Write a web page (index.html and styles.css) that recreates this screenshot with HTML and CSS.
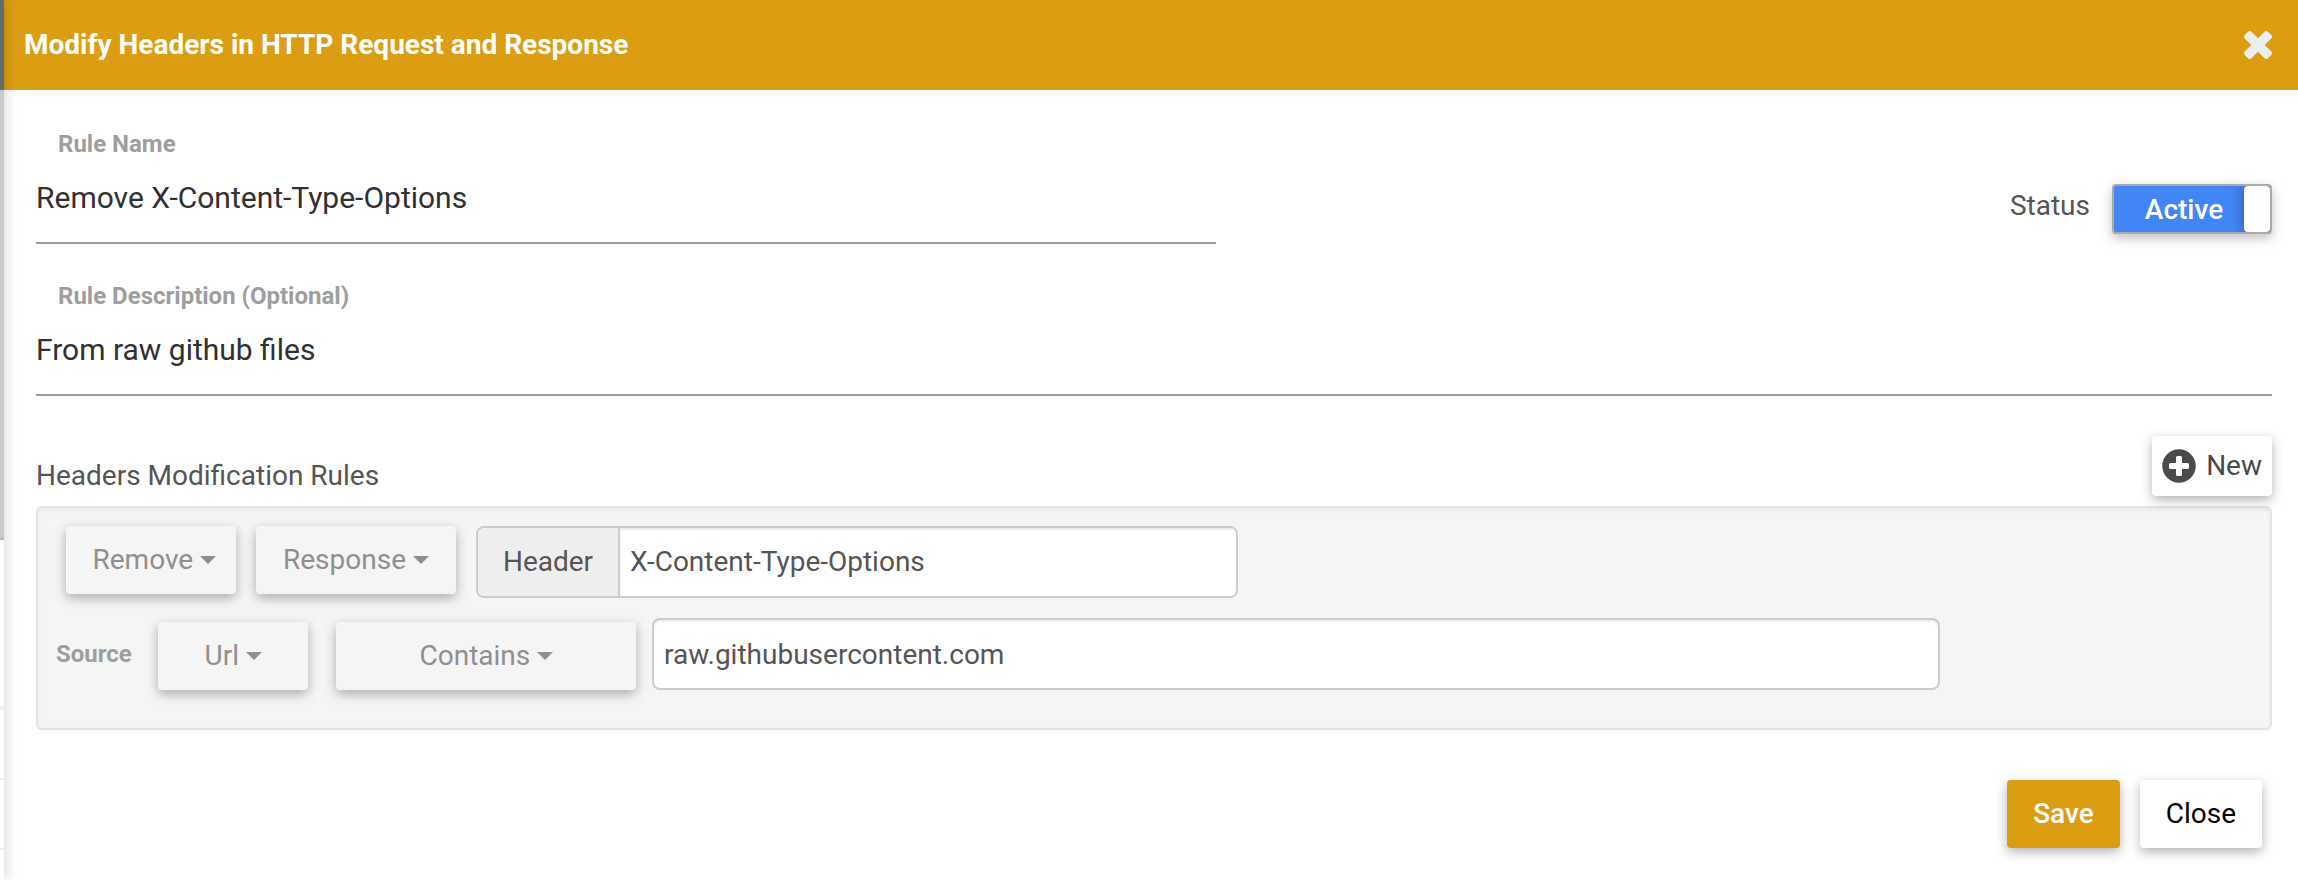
FILE: index.html
```html
<!DOCTYPE html>
<html lang="en">
<head>
<meta charset="utf-8">
<title>Modify Headers in HTTP Request and Response</title>
<link rel="stylesheet" href="styles.css">
</head>
<body>
<div class="page">
  <div class="backdrop" aria-hidden="true">
    <div class="backdrop-nav"></div>
    <div class="backdrop-panel"></div>
    <div class="backdrop-gap"></div>
    <div class="backdrop-row"></div>
    <div class="backdrop-row"></div>
  </div>
  <main class="editor">
    <header class="editor-header">
      <h1 class="editor-title">Modify Headers in HTTP Request and Response</h1>
      <button class="dismiss" type="button" aria-label="Close editor">
        <svg class="dismiss-icon" viewBox="0 0 26 26" fill="#eee" aria-hidden="true"><rect x="-2.200" y="8.600" width="30.400" height="8.800" rx="2.200" transform="rotate(45 13 13)"/><rect x="-2.200" y="8.600" width="30.400" height="8.800" rx="2.200" transform="rotate(-45 13 13)"/></svg>
      </button>
    </header>
    <form class="editor-body">
      <div class="name-row">
        <div class="field field-name">
          <label class="field-label" for="rule-name">Rule Name</label>
          <input class="field-input" id="rule-name" type="text" value="Remove X-Content-Type-Options">
        </div>
        <div class="status">
          <label class="status-label" for="status">Status</label>
          <label class="toggle">
            <input class="toggle-box" id="status" type="checkbox" checked>
            <span class="toggle-text">Active</span>
            <span class="toggle-handle"></span>
          </label>
        </div>
      </div>
      <div class="field">
        <label class="field-label" for="rule-description">Rule Description (Optional)</label>
        <input class="field-input" id="rule-description" type="text" value="From raw github files">
      </div>
      <div class="section-head">
        <h2 class="section-title">Headers Modification Rules</h2>
        <button class="button button-new" type="button">
          <svg class="plus-icon" viewBox="0 0 34 34" aria-hidden="true"><circle cx="17" cy="17" r="16.700" fill="#4a4a4a"/><path d="M14 8.500a1.500 1.500 0 0 1 1.500-1.500h3a1.500 1.500 0 0 1 1.500 1.500V14h5.500a1.500 1.500 0 0 1 1.500 1.500v3a1.500 1.500 0 0 1-1.500 1.500H20v5.500a1.500 1.500 0 0 1-1.500 1.500h-3a1.500 1.500 0 0 1-1.500-1.500V20H8.500A1.500 1.500 0 0 1 7 18.500v-3A1.500 1.500 0 0 1 8.500 14H14Z" fill="#fff"/></svg>
          New
        </button>
      </div>
      <section class="rules">
        <div class="rule-row">
          <div class="picker picker-action">
            <select class="picker-select" aria-label="Action"><option>Remove</option></select>
            <span class="caret"></span>
          </div>
          <div class="picker picker-target">
            <select class="picker-select" aria-label="Target"><option>Response</option></select>
            <span class="caret"></span>
          </div>
          <div class="input-group">
            <label class="addon" for="header-name">Header</label>
            <input class="group-input" id="header-name" type="text" value="X-Content-Type-Options">
          </div>
        </div>
        <div class="rule-row source-row">
          <label class="source-label" for="source-value">Source</label>
          <div class="picker picker-key">
            <select class="picker-select" aria-label="Source key"><option>Url</option></select>
            <span class="caret"></span>
          </div>
          <div class="picker picker-operator">
            <select class="picker-select" aria-label="Operator"><option>Contains</option></select>
            <span class="caret"></span>
          </div>
          <input class="source-input" id="source-value" type="text" value="raw.githubusercontent.com">
        </div>
      </section>
      <footer class="actions">
        <button class="button button-save" type="submit">Save</button>
        <button class="button button-close" type="button">Close</button>
      </footer>
    </form>
  </main>
</div>
</body>
</html>
```

FILE: styles.css
```css
*, *::before, *::after { box-sizing: border-box; }

body {
  margin: 0;
  background: #fff;
  color: #555;
  font-family: Roboto, "Liberation Sans", sans-serif;
  font-size: 28px;
  line-height: 40px;
}

button, input, select { font: inherit; color: inherit; }

.page {
  display: grid;
  grid-template-columns: 4px 1fr;
  min-height: 100vh;
}

.backdrop {
  position: relative;
  z-index: 1;
  display: flex;
  flex-direction: column;
  background: #fff;
  box-shadow: 0 0 12px rgba(0, 0, 0, .35);
}
.backdrop-nav { height: 90px; background: #6a6a6a; }
.backdrop-panel { height: 450px; background: #cacaca; border-bottom: 2px solid #b8b8b8; }
.backdrop-gap { height: 170px; border-bottom: 4px solid #eee; }
.backdrop-row { height: 70px; border-bottom: 2px solid #eee; }

.editor-header {
  display: flex;
  align-items: center;
  justify-content: space-between;
  height: 90px;
  padding: 0 26px 0 20px;
  background: #db9d12;
}
.editor-title {
  margin: 0;
  color: #fff;
  font-size: 28px;
  font-weight: 700;
}
.dismiss {
  display: flex;
  padding: 0;
  border: 0;
  background: none;
  cursor: pointer;
}
.dismiss-icon { width: 28px; height: 28px; }

.editor-body { padding: 36px 26px 32px 32px; }

.name-row {
  display: flex;
  align-items: flex-end;
  justify-content: space-between;
  gap: 40px;
  margin-bottom: 34px;
}
.field { display: flex; flex-direction: column; }
.field-name { flex: 1; max-width: 1180px; }
.field-label {
  padding-left: 22px;
  color: #9e9e9e;
  font-size: 24px;
  font-weight: 700;
  line-height: 36px;
}
.field-input {
  width: 100%;
  height: 82px;
  padding: 0 0 10px;
  border: 0;
  border-bottom: 2px solid #9e9e9e;
  background: none;
  color: #303030;
  font-size: 30px;
  outline: 0;
}

.status {
  display: flex;
  align-items: flex-start;
  gap: 22px;
  padding-bottom: 10px;
}
.status-label { line-height: 44px; }
.toggle {
  display: flex;
  width: 160px;
  height: 50px;
  overflow: hidden;
  border: 2px solid #aaa;
  border-radius: 4px;
  background: #4285f4;
  box-shadow: 0 4px 12px rgba(0, 0, 0, .25);
  color: #fff;
  font-weight: 500;
  cursor: pointer;
}
.toggle-box {
  position: absolute;
  opacity: 0;
}
.toggle-text {
  flex: 1;
  padding-left: 10px;
  line-height: 48px;
  text-align: center;
}
.toggle-handle {
  width: 26px;
  border-radius: 4px;
  background: #fff;
  box-shadow: 0 0 14px rgba(0, 0, 0, .35);
}

.section-head {
  display: flex;
  align-items: flex-end;
  justify-content: space-between;
  margin: 40px 0 10px;
}
.section-title {
  margin: 0;
  font-size: 28px;
  font-weight: 400;
}

.button {
  border: 0;
  border-radius: 4px;
  background: #fff;
  box-shadow: 0 4px 12px rgba(0, 0, 0, .3);
  cursor: pointer;
}
.button-new {
  display: flex;
  align-items: center;
  gap: 10px;
  height: 60px;
  padding: 0 10px;
  color: #4a4a4a;
}
.plus-icon { width: 34px; height: 34px; }

.rules {
  display: flex;
  flex-direction: column;
  gap: 20px;
  padding: 18px 18px 38px;
  border: 2px solid #e3e3e3;
  border-radius: 6px;
  background: #f5f5f5;
  box-shadow: inset 0 2px 4px rgba(0, 0, 0, .05);
}
.rule-row {
  display: flex;
  align-items: flex-start;
  gap: 20px;
  padding-left: 10px;
}
.source-row {
  gap: 16px;
  padding-left: 0;
}

.picker {
  display: flex;
  flex-shrink: 0;
  align-items: center;
  justify-content: center;
  gap: 6px;
  height: 68px;
  border-radius: 4px;
  background: #f5f5f5;
  box-shadow: 0 4px 12px rgba(0, 0, 0, .3);
  color: #8f8f8f;
}
.picker-action { width: 170px; padding-left: 6px; }
.picker-target { width: 200px; }
.picker-key { width: 150px; margin: 4px 12px 0 8px; }
.picker-operator { width: 300px; margin-top: 4px; }
.picker-select {
  padding: 0;
  border: 0;
  background: none;
  appearance: none;
  outline: 0;
  cursor: pointer;
}
.caret {
  border: 8px solid transparent;
  border-top-color: currentColor;
  border-bottom: 0;
}

.input-group, .source-input {
  flex: 1;
  min-width: 0;
  height: 72px;
  border: 2px solid #ccc;
  border-radius: 8px;
  background: #fff;
}
.input-group {
  display: flex;
  max-width: 762px;
  overflow: hidden;
}
.addon {
  width: 142px;
  flex-shrink: 0;
  border-right: 2px solid #ccc;
  background: #eee;
  line-height: 68px;
  text-align: center;
}
.group-input {
  flex: 1;
  min-width: 0;
  padding: 0 10px;
  border: 0;
  box-shadow: inset 0 2px 2px rgba(0, 0, 0, .075);
  outline: 0;
}
.source-label {
  width: 78px;
  color: #9e9e9e;
  font-size: 24px;
  font-weight: 700;
  line-height: 72px;
}
.source-input {
  max-width: 1288px;
  padding: 0 10px;
  box-shadow: inset 0 2px 2px rgba(0, 0, 0, .075);
  outline: 0;
}

.actions {
  display: flex;
  justify-content: flex-end;
  gap: 20px;
  padding: 50px 10px 0 0;
}
.button-save, .button-close { height: 68px; padding: 0 26px; }
.button-save {
  background: #db9d12;
  color: #fff;
  font-weight: 500;
}
.button-close { color: #000; }
```
